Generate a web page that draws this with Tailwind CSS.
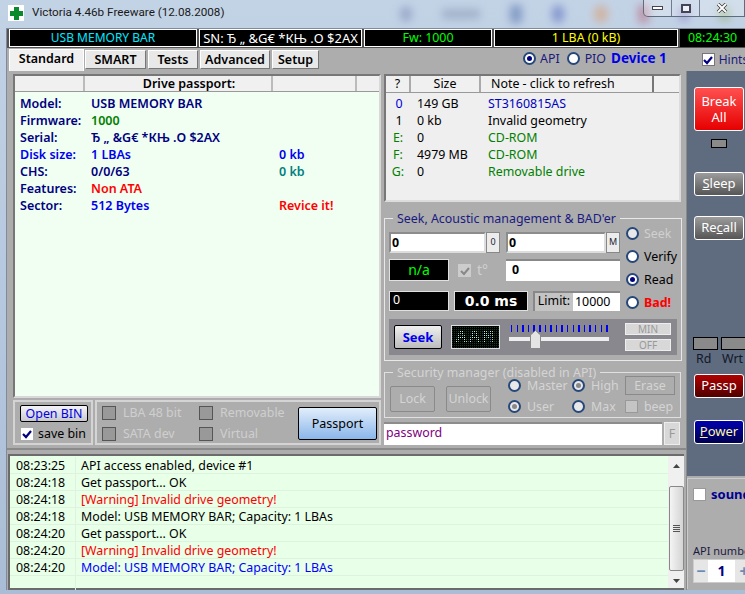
<!DOCTYPE html>
<html><head><meta charset="utf-8">
<script src="https://cdn.jsdelivr.net/npm/@tailwindcss/browser@4"></script>
</head>
<body class="m-0">
<div class="relative w-[745px] h-[594px] overflow-hidden flex flex-col font-['Noto_Sans',sans-serif] text-[12.4px] leading-[17px] text-black bg-[linear-gradient(180deg,#c3d3e6,#a9bdd6)]">
  <!-- blurred desktop behind the glass -->
  <div class="absolute left-[100px] top-[2px] w-[630px] h-[24px] flex gap-[30px] items-center blur-[4px] opacity-60 pl-[300px]">
    <div class="w-[16px] h-[16px] rounded-full bg-[#7f8fb8]"></div>
    <div class="w-[50px] h-[10px] bg-[#8b9bb8]"></div>
    <div class="w-[16px] h-[18px] bg-[#5a78b0]"></div>
    <div class="w-[16px] h-[18px] rounded-full bg-[#5e70c0]"></div>
    <div class="w-[18px] h-[18px] rounded-full bg-[#d8a078]"></div>
    <div class="w-[14px] h-[18px] bg-[#b86a80]"></div>
    <div class="w-[14px] h-[14px] bg-[#8a80c8]"></div>
    <div class="w-[14px] h-[14px] bg-[#90b070]"></div>
  </div>

  <!-- title bar -->
  <div class="relative h-[28px] flex items-start shrink-0">
    <div class="ml-[8px] mt-[5px] w-[16px] h-[16px] bg-white flex items-center justify-center">
      <svg width="15" height="15" viewBox="0 0 15 15"><path d="M5 1h5v4h4v5h-4v4H5v-4H1V5h4z" fill="#0a8a2a"/></svg>
    </div>
    <div class="ml-[8px] mt-[4px] font-['Roboto',sans-serif] text-[11.7px] leading-[17px] text-[#1a1a1a]">Victoria 4.46b Freeware (12.08.2008)</div>
    <div class="ml-auto flex h-[17px] w-[102px] border border-t-0 border-[#5f6c80] rounded-bl-[5px] bg-white/25">
      <div class="w-[28px] flex items-center justify-center border-r border-[#6f7c90]"><div class="w-[11px] h-[4px] bg-white border border-[#445]"></div></div>
      <div class="w-[28px] flex items-center justify-center border-r border-[#6f7c90]"><div class="w-[10px] h-[9px] bg-white/70 border-2 border-[#445]"></div></div>
      <div class="flex-1 flex items-center justify-center">
        <svg width="12" height="10" viewBox="0 0 12 10"><path d="M2 1l8 8M10 1L2 9" stroke="#333" stroke-width="3.4"/><path d="M2 1l8 8M10 1L2 9" stroke="#fff" stroke-width="2"/></svg>
      </div>
    </div>
  </div>

  <!-- window -->
  <div class="relative ml-[6px] h-[562px] bg-[#adadad] flex flex-col border-t border-l border-[#7f8a9a]">
    <!-- status row -->
    <div class="h-[19px] shrink-0 bg-[#525252] flex items-start text-center gap-[2px] pl-[2px]">
      <div class="w-[188px] h-[18px] bg-black border border-white text-[12px] text-[#00e8ff] leading-[16px]">USB MEMORY BAR</div>
      <div class="w-[163px] h-[18px] bg-black border border-white text-white text-[13px] leading-[16px] whitespace-nowrap overflow-hidden">SN: Ђ „ &amp;G€ *КЊ .О $2АХ</div>
      <div class="w-[128px] h-[18px] bg-black border border-white text-[#00ff00] leading-[16px]">Fw: 1000</div>
      <div class="w-[184px] h-[18px] bg-black border border-white text-[#ffff00] leading-[16px]">1 LBA (0 kB)</div>
      <div class="flex-1 h-[18px] bg-black text-[#00ff00] leading-[17px]">08:24:30</div>
    </div>

    <!-- tab row -->
    <div class="h-[23px] shrink-0 flex items-end relative">
      <div class="flex items-end pl-[2px] font-semibold text-[12.5px]">
        <div class="w-[75px] h-[22px] bg-[#f0f0f0] border border-b-0 border-white text-center leading-[18px]">Standard</div>
        <div class="w-[61px] h-[19px] ml-px mb-[2px] bg-[#e8e8e8] border border-[#fff] border-r-[#777] border-b-[#777] text-center leading-[17px]">SMART</div>
        <div class="w-[50px] h-[19px] ml-[2px] mb-[2px] bg-[#e8e8e8] border border-[#fff] border-r-[#777] border-b-[#777] text-center leading-[17px]">Tests</div>
        <div class="w-[70px] h-[19px] ml-[2px] mb-[2px] bg-[#e8e8e8] border border-[#fff] border-r-[#777] border-b-[#777] text-center leading-[17px]">Advanced</div>
        <div class="w-[47px] h-[19px] ml-[2px] mb-[2px] bg-[#e8e8e8] border border-[#fff] border-r-[#777] border-b-[#777] text-center leading-[17px]">Setup</div>
      </div>
      <div class="ml-[204px] h-[22px] flex items-center text-[#1a1a7a] pb-[3px] whitespace-nowrap">
        <div class="w-[13px] h-[13px] rounded-full bg-white border-2 border-[#26477a] flex items-center justify-center"><div class="w-[5px] h-[5px] rounded-full bg-[#000080]"></div></div>
        <span class="ml-[4px]">API</span>
        <div class="ml-[7px] w-[13px] h-[13px] rounded-full bg-white border-2 border-[#26477a]"></div>
        <span class="ml-[5px]">PIO</span>
        <span class="ml-[5px] font-bold text-[13.5px] text-[#0000e8]">Device 1</span>
      </div>
      <div class="ml-[35px] h-[22px] flex items-center text-[#1a1a7a] pb-[1px] whitespace-nowrap">
        <div class="w-[13px] h-[13px] bg-white border border-[#777] flex items-center justify-center shrink-0">
          <svg width="10" height="10" viewBox="0 0 10 10"><path d="M1 5l3 3 5-6" stroke="#000080" stroke-width="2.2" fill="none"/></svg>
        </div>
        <span class="ml-[4px] text-[12px]">Hints</span>
      </div>
    </div>

    <!-- main -->
    <div class="flex flex-1 min-h-0">
      <div class="w-[680px] shrink-0 flex flex-col border-r border-[#8a8a8a]">
        <div class="h-[379px] shrink-0 flex bg-[#adadad] border-b-2 border-[#8a8a8a]">
          <!-- left column -->
          <div class="w-[377px] pl-[6px] pt-[3px] flex flex-col">
            <div class="w-[368px] h-[324px] bg-[#f0fff2] border-2 border-[#d8d8d8] border-t-[#777] border-l-[#777] flex flex-col">
              <div class="h-[16px] bg-[#f0f0f0] flex font-semibold text-[12.5px] leading-[16px] border-b border-[#999]">
                <div class="w-[70px] border-r-2 border-[#bbb]"></div>
                <div class="w-[188px] border-r-2 border-[#bbb] text-center pl-[22px]">Drive passport:</div>
                <div class="w-[84px] border-r-2 border-[#bbb]"></div>
              </div>
              <div class="pl-[5px] pt-[3px] font-semibold text-[12.5px] text-[#000080]">
                <div class="flex h-[17px]"><div class="w-[71px]">Model:</div><div>USB MEMORY BAR</div></div>
                <div class="flex h-[17px]"><div class="w-[71px]">Firmware:</div><div class="text-[#008000]">1000</div></div>
                <div class="flex h-[17px]"><div class="w-[71px]">Serial:</div><div>Ђ „ &amp;G€ *КЊ .О $2АХ</div></div>
                <div class="flex h-[17px] text-[#0000f0]"><div class="w-[71px]">Disk size:</div><div class="w-[188px]">1 LBAs</div><div>0 kb</div></div>
                <div class="flex h-[17px]"><div class="w-[71px]">CHS:</div><div class="w-[188px]">0/0/63</div><div class="text-[#008080]">0 kb</div></div>
                <div class="flex h-[17px]"><div class="w-[71px]">Features:</div><div class="text-[#ff0000]">Non ATA</div></div>
                <div class="flex h-[17px]"><div class="w-[71px]">Sector:</div><div class="w-[188px] text-[#0000f0]">512 Bytes</div><div class="text-[#ff0000]">Revice it!</div></div>
              </div>
            </div>
            <div class="mt-[2px] w-[368px] h-[45px] flex gap-[2px]">
              <div class="w-[80px] border-2 border-[#d4d4d4] pl-[5px] pt-[3px] flex flex-col">
                <div class="w-[68px] h-[17px] rounded-[2px] bg-[linear-gradient(180deg,#f4f4f8,#c8c8d0)] border border-black text-[#0000e0] text-center leading-[15px]">Open BIN</div>
                <div class="flex items-center mt-[3px] ml-[1px]">
                  <div class="w-[12px] h-[12px] bg-white flex items-center justify-center"><svg width="10" height="10" viewBox="0 0 10 10"><path d="M1 5l3 3 5-6" stroke="#000080" stroke-width="2.2" fill="none"/></svg></div>
                  <span class="ml-[5px]">save bin</span>
                </div>
              </div>
              <div class="flex-1 border-2 border-[#d4d4d4] flex items-center pl-[5px] pt-px text-[#cfcfcf]">
                <div class="w-[97px] flex flex-col gap-[4px]">
                  <div class="flex items-center"><div class="w-[14px] h-[14px] bg-[#999] border border-[#555]"></div><span class="ml-[7px]">LBA 48 bit</span></div>
                  <div class="flex items-center"><div class="w-[14px] h-[14px] bg-[#999] border border-[#555]"></div><span class="ml-[7px]">SATA dev</span></div>
                </div>
                <div class="w-[99px] flex flex-col gap-[4px]">
                  <div class="flex items-center"><div class="w-[14px] h-[14px] bg-[#999] border border-[#555]"></div><span class="ml-[7px]">Removable</span></div>
                  <div class="flex items-center"><div class="w-[14px] h-[14px] bg-[#999] border border-[#555]"></div><span class="ml-[7px]">Virtual</span></div>
                </div>
                <div class="w-[79px] h-[33px] rounded-[2px] border border-black bg-[linear-gradient(180deg,#e2eefb,#8ab6ea)] text-center text-[12.5px] leading-[31px] text-black">Passport</div>
              </div>
            </div>
          </div>

          <!-- right column -->
          <div class="w-[297px] pt-[3px] flex flex-col">
            <div class="h-[128px] bg-[#efefef] border-2 border-[#dcdcdc] border-t-[#777] border-l-[#777] flex flex-col shrink-0">
              <div class="h-[17px] bg-[#f0f0f0] flex border-b border-[#999] leading-[15px]">
                <div class="w-[25px] border-r-2 border-[#aaa] text-center">?</div>
                <div class="w-[70px] border-r-2 border-[#aaa] text-center">Size</div>
                <div class="w-[173px] border-r-2 border-[#777] pl-[10px]">Note - click to refresh</div>
              </div>
              <div class="pt-[2px]">
                <div class="flex h-[17px]"><div class="w-[24px] text-center text-[#0000e0] pl-[2px]">0</div><div class="w-[78px] pl-[7px]">149 GB</div><div class="text-[#0000c0]">ST3160815AS</div></div>
                <div class="flex h-[17px]"><div class="w-[24px] text-center pl-[2px]">1</div><div class="w-[78px] pl-[7px]">0 kb</div><div>Invalid geometry</div></div>
                <div class="flex h-[17px]"><div class="w-[24px] text-center text-[#008000]">E:</div><div class="w-[78px] pl-[7px]">0</div><div class="text-[#008000]">CD-ROM</div></div>
                <div class="flex h-[17px]"><div class="w-[24px] text-center text-[#008000]">F:</div><div class="w-[78px] pl-[7px]">4979 MB</div><div class="text-[#008000]">CD-ROM</div></div>
                <div class="flex h-[17px]"><div class="w-[24px] text-center text-[#008000]">G:</div><div class="w-[78px] pl-[7px]">0</div><div class="text-[#008000]">Removable drive</div></div>
              </div>
            </div>

            <fieldset class="mt-[8px] h-[151px] w-[297px] border border-[#e8e8e8] px-[4px] shrink-0">
              <legend class="ml-[4px] px-[4px] text-[#1a1a80] h-[17px] leading-[18px]">Seek, Acoustic management &amp; BAD'er</legend>
              <div class="flex pt-[5px] h-[92px]">
                <div class="w-[233px] shrink-0 flex flex-col">
                  <div class="flex h-[21px]">
                    <div class="w-[97px] bg-white border-2 border-[#8c8c8c] border-r-[#ddd] border-b-[#ddd] font-bold pl-[1px] leading-[17px]">0</div>
                    <div class="w-[14px] bg-[#ececec] border border-[#888] text-[9px] text-center text-[#223] leading-[18px]">0</div>
                    <div class="ml-[6px] w-[100px] bg-white border-2 border-[#8c8c8c] border-r-[#ddd] border-b-[#ddd] font-bold pl-[1px] leading-[17px]">0</div>
                    <div class="w-[14px] bg-[#ececec] border border-[#888] text-[9px] text-center text-[#223] leading-[18px]">M</div>
                  </div>
                  <div class="flex h-[22px] mt-[6px]">
                    <div class="w-[60px] bg-black border border-[#e0e0e0] text-[#00ff00] text-[14px] text-center leading-[19px]">n/a</div>
                    <div class="ml-[9px] mt-[5px] w-[13px] h-[13px] bg-[#ccc] flex items-center justify-center"><svg width="10" height="10" viewBox="0 0 10 10"><path d="M1 5l3 3 5-6" stroke="#888" stroke-width="2" fill="none"/></svg></div>
                    <div class="ml-[6px] w-[25px] text-[#d0d0d0] text-[14px] leading-[22px]">t°</div>
                    <div class="ml-[4px] w-[114px] bg-white border-t-2 border-[#888] font-bold pl-[6px] leading-[18px]">0</div>
                  </div>
                  <div class="flex h-[20px] mt-[10px]">
                    <div class="w-[60px] bg-black border border-[#e0e0e0] text-white pl-[3px] leading-[15px]">0</div>
                    <div class="ml-[5px] w-[74px] bg-black border border-[#e0e0e0] text-white font-bold text-[14px] text-center leading-[18px] font-['DejaVu_Sans',sans-serif]">0.0 ms</div>
                    <div class="ml-[5px] w-[87px] flex border-t-2 border-l-2 border-[#888]">
                      <div class="w-[38px] bg-[#c4c4c4] text-center leading-[16px]">Limit:</div>
                      <div class="flex-1 bg-white pl-[2px] leading-[18px]">10000</div>
                    </div>
                  </div>
                </div>
                <div class="ml-[4px] -mt-[5px] flex flex-col gap-[10px] whitespace-nowrap">
                  <div class="flex items-center h-[13px] text-[#d0d0d0]"><div class="w-[13px] h-[13px] rounded-full bg-[#e8e8e8] border-2 border-[#26477a] shrink-0"></div><span class="ml-[5px]">Seek</span></div>
                  <div class="flex items-center h-[13px]"><div class="w-[13px] h-[13px] rounded-full bg-white border-2 border-[#26477a] shrink-0"></div><span class="ml-[5px]">Verify</span></div>
                  <div class="flex items-center h-[13px]"><div class="w-[13px] h-[13px] rounded-full bg-white border-2 border-[#26477a] flex items-center justify-center shrink-0"><div class="w-[5px] h-[5px] rounded-full bg-[#000080]"></div></div><span class="ml-[5px]">Read</span></div>
                  <div class="flex items-center h-[13px] text-[#ff0000] font-bold"><div class="w-[13px] h-[13px] rounded-full bg-white border-2 border-[#26477a] shrink-0"></div><span class="ml-[5px]">Bad!</span></div>
                </div>
              </div>
              <!-- control strip -->
              <div class="h-[36px] bg-[#88888e] flex items-center pl-[5px] pr-[5px]">
                <div class="w-[48px] h-[24px] rounded-[2px] border border-black bg-[linear-gradient(180deg,#f0f0f0,#bcbcbc)] text-[#0000f0] font-bold text-[13px] text-center leading-[22px]">Seek</div>
                <div class="relative ml-[9px] w-[49px] h-[24px] bg-[#0f3a24] border border-[#ddd] overflow-hidden text-center text-[#a8ffe0] font-['Liberation_Mono',monospace] font-bold text-[19px] tracking-[2px] leading-[22px]">AAM<div class="absolute inset-0 bg-[repeating-linear-gradient(90deg,transparent_0,transparent_1px,#000_1px,#000_2px),repeating-linear-gradient(0deg,transparent_0,transparent_1px,#000_1px,#000_2px)]"></div></div>
                <div class="ml-[9px] w-[100px] h-[24px] flex flex-col items-center relative">
                  <div class="w-[97px] h-[7px] bg-[repeating-linear-gradient(90deg,#0000f0_0,#0000f0_1.5px,transparent_1.5px,transparent_5.6px)]"></div>
                  <div class="mt-[5px] w-[100px] h-[4px] bg-[#eeeeee]"></div>
                  <svg class="absolute left-[21px] top-[5px]" width="11" height="19" viewBox="0 0 11 19"><path d="M0.5 18.5V5L5.5 0.5L10.5 5V18.5Z" fill="#e4e4e4" stroke="#888"/></svg>
                </div>
                <div class="ml-[16px] flex flex-col gap-[4px]">
                  <div class="w-[46px] h-[12px] bg-[#d8d8d8] border border-[#eee] text-[#999] text-[10px] text-center leading-[11px]">MIN</div>
                  <div class="w-[46px] h-[12px] bg-[#d8d8d8] border border-[#eee] text-[#999] text-[10px] text-center leading-[11px]">OFF</div>
                </div>
              </div>
            </fieldset>

            <fieldset class="mt-[3px] h-[54px] w-[297px] border border-[#e0e0e0] shrink-0 text-[#d4d4d4]">
              <legend class="ml-[8px] px-[4px] h-[17px] leading-[17px]">Security manager (disabled in API)</legend>
              <div class="flex pl-[5px] mt-[-4px]">
                <div class="mt-[9px] w-[45px] h-[26px] border border-[#8a8a8a] rounded-[2px] text-center leading-[24px]">Lock</div>
                <div class="ml-[11px] mt-[9px] w-[45px] h-[26px] border border-[#8a8a8a] rounded-[2px] text-center leading-[24px]">Unlock</div>
                <div class="ml-[17px] w-[64px] flex flex-col gap-[8px] mt-[2px]">
                  <div class="flex items-center h-[13px]"><div class="w-[13px] h-[13px] rounded-full bg-[#e8e8e8] border-2 border-[#26477a]"></div><span class="ml-[6px]">Master</span></div>
                  <div class="flex items-center h-[13px]"><div class="w-[13px] h-[13px] rounded-full bg-[#e8e8e8] border-2 border-[#26477a] flex items-center justify-center"><div class="w-[5px] h-[5px] rounded-full bg-[#888]"></div></div><span class="ml-[6px]">User</span></div>
                </div>
                <div class="w-[53px] flex flex-col gap-[8px] mt-[2px]">
                  <div class="flex items-center h-[13px]"><div class="w-[13px] h-[13px] rounded-full bg-[#e8e8e8] border-2 border-[#26477a] flex items-center justify-center"><div class="w-[5px] h-[5px] rounded-full bg-[#888]"></div></div><span class="ml-[6px]">High</span></div>
                  <div class="flex items-center h-[13px]"><div class="w-[13px] h-[13px] rounded-full bg-[#e8e8e8] border-2 border-[#26477a]"></div><span class="ml-[6px]">Max</span></div>
                </div>
                <div class="flex flex-col">
                  <div class="w-[50px] h-[19px] mt-[-1px] border border-[#8a8a8a] text-center leading-[17px]">Erase</div>
                  <div class="flex items-center mt-[3px]"><div class="w-[13px] h-[13px] bg-[#c4c4c4] border border-[#999]"></div><span class="ml-[6px]">beep</span></div>
                </div>
              </div>
            </fieldset>

            <div class="mt-[4px] flex h-[23px] shrink-0">
              <div class="w-[278px] bg-white border-t-2 border-[#8c8c8c] text-[#800080] pl-[2px] leading-[18px]">password</div>
              <div class="ml-[2px] w-[16px] bg-[#d8d8d8] border border-[#eee] text-[#999] text-center leading-[21px]">F</div>
            </div>
          </div>
        </div>

        <!-- log -->
        <div class="flex mt-[4px] h-[136px] ml-[1px] w-[676px] border-2 border-[#6b6b6b] border-r-0 border-b-[#6b6b6b]">
          <div class="flex-1 bg-[#e8ffe8] pt-px">
            <div class="flex h-[17px] border-b border-[#dff2df]"><div class="w-[66px] pl-[6px] border-r border-[#dff2df]">08:23:25</div><div class="pl-[5px]">API access enabled, device #1</div></div>
            <div class="flex h-[17px] border-b border-[#dff2df]"><div class="w-[66px] pl-[6px] border-r border-[#dff2df]">08:24:18</div><div class="pl-[5px]">Get passport... OK</div></div>
            <div class="flex h-[17px] border-b border-[#dff2df]"><div class="w-[66px] pl-[6px] border-r border-[#dff2df]">08:24:18</div><div class="pl-[5px] text-[#ff0000]">[Warning] Invalid drive geometry!</div></div>
            <div class="flex h-[17px] border-b border-[#dff2df]"><div class="w-[66px] pl-[6px] border-r border-[#dff2df]">08:24:18</div><div class="pl-[5px]">Model: USB MEMORY BAR; Capacity: 1 LBAs</div></div>
            <div class="flex h-[17px] border-b border-[#dff2df]"><div class="w-[66px] pl-[6px] border-r border-[#dff2df]">08:24:20</div><div class="pl-[5px]">Get passport... OK</div></div>
            <div class="flex h-[17px] border-b border-[#dff2df]"><div class="w-[66px] pl-[6px] border-r border-[#dff2df]">08:24:20</div><div class="pl-[5px] text-[#ff0000]">[Warning] Invalid drive geometry!</div></div>
            <div class="flex h-[17px] border-b border-[#dff2df]"><div class="w-[66px] pl-[6px] border-r border-[#dff2df]">08:24:20</div><div class="pl-[5px] text-[#0000ff]">Model: USB MEMORY BAR; Capacity: 1 LBAs</div></div>
            <div class="flex h-[14px]"><div class="w-[66px] border-r border-[#dff2df]"></div></div>
          </div>
          <div class="w-[16px] bg-[#f0f0f0] flex flex-col items-center">
            <svg class="mt-[8px]" width="7" height="4" viewBox="0 0 7 4"><path d="M3.5 0L7 4H0z" fill="#444"/></svg>
            <div class="mt-[18px] w-[15px] h-[85px] rounded-[2px] border border-[#888] bg-[linear-gradient(90deg,#f4f4f4,#d4d4d4)] flex flex-col items-center justify-center gap-[1px]">
              <div class="w-[7px] h-px bg-[#555]"></div><div class="w-[7px] h-px bg-[#555]"></div><div class="w-[7px] h-px bg-[#555]"></div><div class="w-[7px] h-px bg-[#555]"></div>
            </div>
            <svg class="mt-[8px]" width="7" height="4" viewBox="0 0 7 4"><path d="M0 0H7L3.5 4z" fill="#444"/></svg>
          </div>
        </div>
      </div>

      <!-- right sidebar -->
      <div class="flex-1 flex flex-col min-w-0 overflow-hidden">
        <div class="h-[405px] bg-[#5f6b7f] shrink-0 flex flex-col pl-[7px] pt-[16px] text-white">
          <div class="w-[50px] h-[44px] rounded-[3px] border border-white bg-[linear-gradient(180deg,#ff5050,#e60000)] text-center text-[13px] leading-[16px] pt-[5px]">Break<br>All</div>
          <div class="mt-[8px] ml-[17px] w-[16px] h-[9px] bg-[#8a8a8a] border border-black"></div>
          <div class="mt-[24px] w-[50px] h-[24px] rounded-[3px] border border-white bg-[linear-gradient(180deg,#9c9c9c,#565656)] text-center text-[13px] leading-[20px]"><span class="underline">S</span>leep</div>
          <div class="mt-[20px] w-[50px] h-[24px] rounded-[3px] border border-white bg-[linear-gradient(180deg,#9c9c9c,#565656)] text-center text-[13px] leading-[20px]">Re<span class="underline">c</span>all</div>
          <div class="mt-[97px] -ml-px flex gap-[3px]">
            <div class="w-[25px] h-[13px] shrink-0 bg-[#8a8a8a] border border-black"></div>
            <div class="w-[25px] h-[13px] shrink-0 bg-[#8a8a8a] border border-black"></div>
          </div>
          <div class="flex text-[#111827] whitespace-nowrap"><span class="w-[28px] pl-[2px]">Rd</span><span>Wrt</span></div>
          <div class="mt-[7px] w-[50px] h-[24px] rounded-[3px] border border-white bg-[linear-gradient(180deg,#b00000,#500000)] text-center text-[13px] leading-[20px]">Passp</div>
          <div class="mt-[22px] w-[50px] h-[24px] rounded-[3px] border border-white bg-[linear-gradient(180deg,#0000b0,#000050)] text-center text-[13px] leading-[20px] text-[#fff7a0]"><span class="underline">P</span>ower</div>
        </div>
        <div class="mt-[2px] h-[111px] bg-[#adadad] border-t border-l border-[#ccc] shrink-0 flex flex-col pl-[5px] pt-[7px] whitespace-nowrap">
          <div class="flex items-center"><div class="w-[13px] h-[13px] bg-white border border-[#999] shrink-0"></div><span class="ml-[5px] font-bold text-[13px] text-[#000090]">sound</span></div>
          <div class="mt-[41px] text-[11px] leading-[14px] text-[#1a1a40]">API number</div>
          <div class="mt-[1px] flex h-[24px] border border-[#ccc] bg-[#e6e6e6] w-[60px] text-[#6a8ab8] font-bold text-[16px] leading-[22px]">
            <div class="w-[14px] text-center shrink-0">−</div>
            <div class="w-[27px] bg-white text-center text-[#000080] text-[14px] shrink-0">1</div>
            <div class="ml-[2px] w-[14px] text-center shrink-0">+</div>
          </div>
        </div>
      </div>
    </div>
  </div>
</div>
</body></html>
